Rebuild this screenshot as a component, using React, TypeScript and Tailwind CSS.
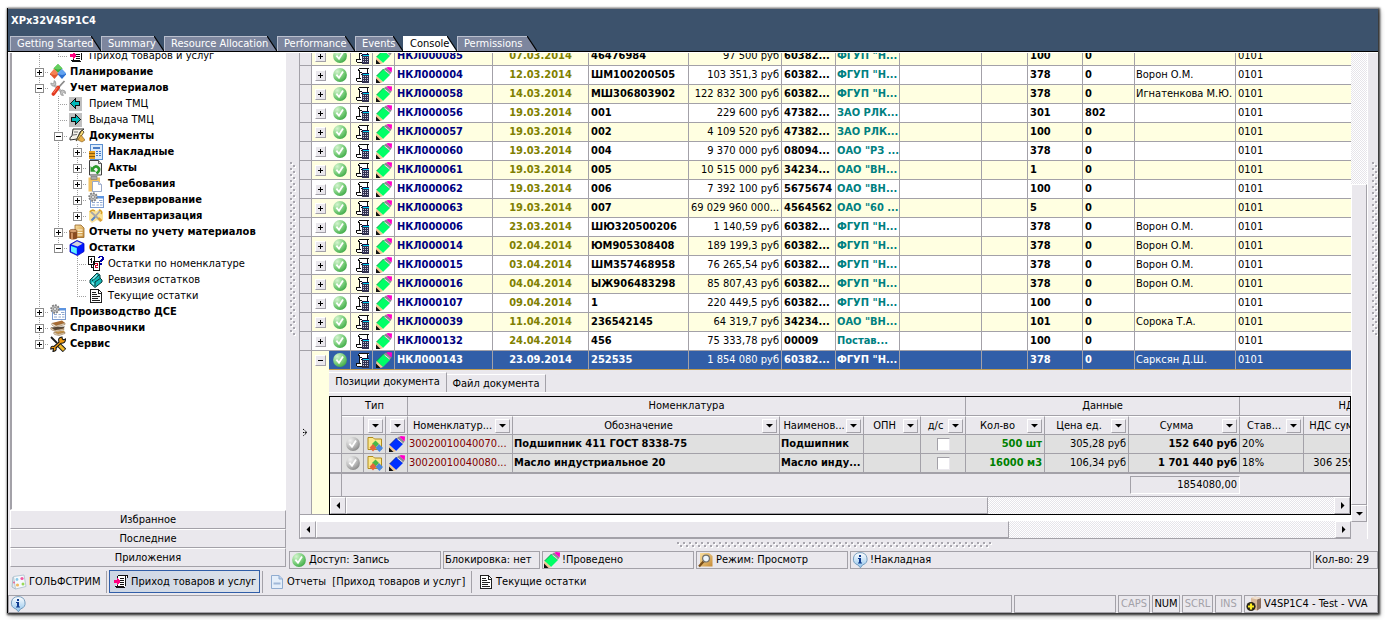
import type { ReactNode } from "react";

const LINE = "border-[#a3a1a8]";
const RAISED = "border border-t-white border-l-white border-r-[#a3a1a8] border-b-[#a3a1a8] bg-[#eae8ed]";
const CHECKER = "bg-[repeating-conic-gradient(#ffffff_0_25%,#e6e4ea_0_50%)] bg-[length:2px_2px]";

/* ---------- icons ---------- */

function Svg({ children, crisp = false }: { children: ReactNode; crisp?: boolean }) {
  return (
    <svg width="16" height="16" viewBox="0 0 16 16" className="block shrink-0" aria-hidden="true" shapeRendering={crisp ? "crispEdges" : "auto"}>
      {children}
    </svg>
  );
}

function Gradients() {
  return (
    <svg width="0" height="0" className="absolute" aria-hidden="true">
      <defs>
        <radialGradient id="ball-green" cx="0.3" cy="0.25" r="0.85">
          <stop offset="0" stopColor="#d4f4cf" />
          <stop offset="0.5" stopColor="#86d486" />
          <stop offset="1" stopColor="#3ba843" />
        </radialGradient>
        <radialGradient id="ball-gray" cx="0.3" cy="0.25" r="0.85">
          <stop offset="0" stopColor="#f0f0f0" />
          <stop offset="0.55" stopColor="#bdbdbd" />
          <stop offset="1" stopColor="#858585" />
        </radialGradient>
        <linearGradient id="info-blue" x1="0" y1="0" x2="0" y2="1">
          <stop offset="0" stopColor="#ffffff" />
          <stop offset="1" stopColor="#8fc3ec" />
        </linearGradient>
        <linearGradient id="tan-sheet" x1="0" y1="0" x2="1" y2="1">
          <stop offset="0" stopColor="#fbe0a0" />
          <stop offset="1" stopColor="#c58a35" />
        </linearGradient>
      </defs>
    </svg>
  );
}

const Ball = ({ gray = false }: { gray?: boolean }) => (
  <Svg>
    <circle cx="8" cy="8" r="6.9" fill={gray ? "url(#ball-gray)" : "url(#ball-green)"} />
    <path d="M4.4 7.6 L7 10.8 L11 4.4" fill="none" stroke="#ffffff" strokeWidth="1.8" />
  </Svg>
);

const Pencil = ({ blue = false }: { blue?: boolean }) => (
  <Svg>
    <path d="M0.5 9 L7.5 2 L14 8 L7 15 Z" fill={blue ? "#0030ff" : "#00ff66"} />
    <path d="M0.5 9 L7.5 2" stroke={blue ? "#001a90" : "#008a3c"} strokeWidth="0.8" />
    <path d="M0.5 9 L7 15 L4.5 16 L0 12 Z" fill="#f2c892" />
    <path d="M0 11.5 L4.5 16 L0 16 Z" fill="#101010" />
    <path d="M7.5 2.4 L10 0.5 L15.6 5.5 L13.5 8 Z" fill="#8c8890" />
    <path d="M8.6 3 L13.6 7" stroke="#e8e8e8" strokeWidth="1" />
    <path d="M10.3 0.8 L12 0 L16 0.6 L15.8 5 L14.6 4.8 Z" fill="#ff00c8" />
  </Svg>
);

const DocCalc = () => (
  <Svg crisp>
    <path d="M4 1 H14 V3 H12 V6 H13 V8 H8 V14 H1 V11 H4 V4 H3 V2 H4 Z" fill="#ffffff" />
    <path d="M4 1 H14 V2 H4 Z M3 2 H4 V4 H3 Z M4 3 H5 V11 H4 Z M5 5 H7 V6 H5 Z M1 11 H6 V12 H1 Z M1 12 H2 V14 H1 Z M2 14 H8 V15 H2 Z M12 2 H13 V6 H12 Z M6 7 H8 V8 H6 Z" fill="#101010" />
    <path d="M7 7 H14 V16 H7 Z" fill="#303050" />
    <path d="M7 6 H14 V7 H7 Z" fill="#101048" />
    <path d="M8 7 H14 V8 H8 Z" fill="#00d0f0" />
    <path d="M8 9h1v1h-1z M10 9h1v1h-1z M12 9h1v1h-1z M8 11h1v1h-1z M10 11h1v1h-1z M12 11h1v1h-1z M8 13h1v1h-1z M10 13h1v1h-1z M12 13h1v1h-1z" fill="#c8c8d8" />
  </Svg>
);

const Receipt = () => (
  <Svg crisp>
    <path d="M5 2 H14 V4 H12 V13 H3 V11 H5 Z" fill="#ffffff" />
    <path d="M5 1 H15 V2 H5 Z M14 2 H15 V4 H14 Z M12 2 H13 V12 H12 Z M4 2 H5 V6 H4 Z M4 10 H5 V12 H4 Z M2 12 H11 V13 H2 Z M3 13 H12 V14 H3 Z M7 4h4v1h-4z M7 6h4v1h-4z M7 8h4v1h-4z M7 10h4v1h-4z" fill="#101010" />
    <path d="M1 6 H4 V4 H5 V5 H6 V6 H7 V9 H6 V10 H5 V11 H4 V9 H1 Z" fill="#ff0080" />
  </Svg>
);

const Planning = () => (
  <Svg>
    <path d="M8 0 L12.5 4.5 L8 9 L3.5 4.5 Z" fill="#3fae3f" />
    <path d="M8 0 L12.5 4.5 L8 5.5 L3.5 4.5 Z" fill="#66d060" />
    <path d="M4.2 5 L8.7 10 L4.5 15 L-0.3 10 Z" fill="#e2562c" />
    <path d="M4.2 5 L8.7 10 L4.5 11 L-0.3 10 Z" fill="#f58252" />
    <path d="M11.8 5 L16.4 10 L12 15 L7.4 10 Z" fill="#2c6fd0" />
    <path d="M11.8 5 L16.4 10 L12 11 L7.4 10 Z" fill="#62a2f0" />
  </Svg>
);

const Tools = () => (
  <Svg>
    <path d="M4 5 L12 12" stroke="#b8b8b8" strokeWidth="2.6" />
    <path d="M0.8 3 Q1 6.6 4.4 6 Q7 4.6 5.4 1.4 L4 0.6 L4 3 L2.6 3.6 Z" fill="#c4c4c4" stroke="#8e8e8e" strokeWidth="0.7" />
    <path d="M11 15 Q9.4 11 12.6 10 Q16 10.4 15.6 13.6 L13.6 12.6 L12.6 13.6 L13.4 15.6 Z" fill="#c4c4c4" stroke="#8e8e8e" strokeWidth="0.7" />
    <path d="M14.5 1 L8 8" stroke="#8a8a8a" strokeWidth="1.8" />
    <path d="M8.2 7.5 L3.4 14" stroke="#e23a20" strokeWidth="3.6" strokeLinecap="round" />
    <path d="M7.5 7.5 L3.5 13" stroke="#ff8a70" strokeWidth="0.9" />
  </Svg>
);

const Arrow = ({ right = false }: { right?: boolean }) => (
  <Svg crisp>
    <rect x="0" y="1" width="13" height="14" fill="#c0c0c0" />
    <path
      d={right ? "M11.5 7.5 L6.5 2.5 V5.5 H2.5 V9.5 H6.5 V12.5 Z" : "M1.5 7.5 L6.5 2.5 V5.5 H10.5 V9.5 H6.5 V12.5 Z"}
      fill="#00b8b8"
      stroke="#101010"
    />
  </Svg>
);

const Documents = () => (
  <Svg>
    <path d="M4 1 H15 L11 4 L8 11 L1 12 Q0 9 3 8 Z" fill="#f4f2ea" stroke="#303030" strokeWidth="1" />
    <path d="M5 4 L9 4 M4 7 L8 6.5" stroke="#707070" />
    <path d="M13 2 L9 9 L7 13 L11 10 L15 4 Z" fill="#ffe27a" stroke="#40341a" strokeWidth="0.8" />
    <path d="M12 7 L16 12 L13 14 L9 12 Z" fill="#e8b04a" stroke="#805818" strokeWidth="0.6" />
  </Svg>
);

const Invoice = () => (
  <Svg crisp>
    <rect x="2.5" y="0.5" width="12" height="15" fill="#dcebfb" stroke="#5a8fd0" />
    <path d="M5 3h7v2h-7z M8 7h2v1h-2z M11 7h2v1h-2z M8 9h2v1h-2z M11 9h2v1h-2z M8 11h2v1h-2z M11 11h2v1h-2z" fill="#4a7cc4" />
    <path d="M1 7h6v2h-6z M1 10h6v2h-6z M1 13h6v2h-6z" fill="#e8a020" />
    <path d="M1 9h6v1h-6z M1 12h6v1h-6z" fill="#8a5a08" />
  </Svg>
);

const Acts = () => (
  <Svg>
    <path d="M1.5 0.5 H10.5 L13.5 3.5 V15 H1.5 Z" fill="#f4f4f4" stroke="#404040" />
    <path d="M10.5 0.5 V3.5 H13.5" fill="#d0d0d0" stroke="#404040" strokeWidth="0.8" />
    <path d="M4.5 9 Q8 4 11 8.5 Q11.8 11 8.5 13.5" fill="none" stroke="#2a9a2a" strokeWidth="2.6" />
    <path d="M2.5 6 V11.8 H8 Z" fill="#2a9a2a" />
  </Svg>
);

const Clipboard = () => (
  <Svg>
    <rect x="0.5" y="1.5" width="11.5" height="14" fill="#f0c060" />
    <rect x="3" y="0.3" width="6" height="3" fill="#a8a8a8" stroke="#707070" strokeWidth="0.6" />
    <path d="M4.5 5.5 H10.5 L13.5 8.5 V15.5 H4.5 Z" fill="#ffffff" stroke="#98a8c8" />
    <path d="M10.5 5.5 V8.5 H13.5" fill="#d8e0f0" stroke="#98a8c8" strokeWidth="0.8" />
  </Svg>
);

const GearTable = () => (
  <Svg>
    <rect x="2.5" y="4.5" width="13" height="11" fill="#ffffff" stroke="#7c9cd0" />
    <path d="M9 4 H16 V6.5 H9 Z" fill="#5c94e0" />
    <path d="M4 10.5h3 M8.5 10.5h2.5 M12 10.5h2.5 M4 13h3 M8.5 13h2.5 M12 13h2.5 M11 8.5h3.5" stroke="#90a8d0" />
    <circle cx="5" cy="5" r="3.8" fill="#c0c0c0" stroke="#808080" strokeWidth="1.8" strokeDasharray="1.8 1.1" />
    <circle cx="5" cy="5" r="1.5" fill="#f4f4f4" stroke="#707070" strokeWidth="0.7" />
  </Svg>
);

const Inventory = () => (
  <Svg>
    <path d="M1 3 L5 1 L8 3 L12 1 L15 4 V12 L12 14 L9 12 L4 15 L1 12 Z" fill="#fbe398" />
    <path d="M3 4 L13 13 M12 3 L4 12" stroke="#a8a8a8" strokeWidth="1.8" />
    <path d="M2 4 Q4 1 7 3 M11 2 Q15 3 13 6" fill="none" stroke="#d8a028" strokeWidth="1.4" />
    <path d="M3.5 12.5 L7 9" stroke="#5c86c8" strokeWidth="2" />
    <path d="M10.5 10 L13.5 13" stroke="#e0a030" strokeWidth="2.4" />
  </Svg>
);

const Reports = () => (
  <Svg>
    <path d="M6 1 H12 L15 4 V13.5 H6 Z" fill="url(#tan-sheet)" stroke="#94662a" strokeWidth="0.8" />
    <path d="M8.5 6h5 M8.5 8.5h5 M8.5 11h5" stroke="#fff6dc" />
    <path d="M0.3 7 V14.4 Q4 16.6 8.2 14.4 V7 Z" fill="#8a4c20" />
    <path d="M3 7.5 V15.4" stroke="#dca070" strokeWidth="1.6" />
    <ellipse cx="4.2" cy="7" rx="3.9" ry="1.7" fill="#d8a070" stroke="#6e3a14" strokeWidth="0.6" />
  </Svg>
);

const Cube = () => (
  <Svg>
    <path d="M1 4.5 L8 0.5 L15 3.5 V11.5 L8.5 15.6 L1 12 Z" fill="#0018ff" stroke="#0000c0" strokeWidth="0.8" />
    <path d="M2.5 4.5 L8 1.2 L13.5 3.8 L8.5 6.5 Z" fill="#d4d4d8" />
    <path d="M2 6 L7.8 8 V14.2 L2 11.6 Z" fill="#60f0ff" />
  </Svg>
);

const Nomenclature = () => (
  <Svg crisp>
    <path d="M0.5 0.5 H6.5 V8.5 H0.5 Z M5.5 5.5 H11.5 V14.5 H5.5 Z" fill="#ffffff" stroke="#101010" />
    <path d="M3 2h1v5h-1z M2 3h1v1h-1z M2 9h1v3h3v-1h-2v-2z" fill="#101010" />
    <path d="M7 7h3v3h-2v1h2v1h-3v-3h2v-1h-2z" fill="#d00020" />
    <path d="M10 1h1v-1h4v1h1v3h-1v1h-1v1h-2v-2h1v-1h1v-2h-2v1h-2z M12 7h2v2h-2z" fill="#0000a8" />
  </Svg>
);

const Revision = () => (
  <Svg>
    <path d="M2 8 L9 1 L12 3 V6 L14 8 V10 L7 15.5 L2 11 Z" fill="#18b8b8" stroke="#083838" strokeWidth="1" />
    <path d="M4 9 L11 3 M7 14 L7 10 L13 6" fill="none" stroke="#083838" strokeWidth="1" />
    <path d="M4 10.5 L6 12.5 M5 7 L9 3" stroke="#a0f4f4" strokeWidth="1.2" />
  </Svg>
);

const Sheet = () => (
  <Svg crisp>
    <path d="M2.5 1.5 H10.5 L13.5 4.5 V14.5 H2.5 Z" fill="#ffffff" stroke="#202020" />
    <path d="M10 1h1v4h3v1h-4z M4 4h4v1h-4z M4 6h5v1h-5z M4 8h8v1h-8z M4 10h6v1h-6z M4 12h8v1h-8z" fill="#202020" />
  </Svg>
);

const Books = () => (
  <Svg>
    <path d="M2 3 L12 0.5 L15 3 L6 6 Z" fill="#a86c34" />
    <path d="M2 3 Q1 5 3 6 L6 7 L15 4.5 V3 L6 5.6 Z" fill="#f4ead8" stroke="#7a5228" strokeWidth="0.5" />
    <path d="M1 7.5 L6 7 L15 6.5 L13 9 L5 11 Z" fill="#58493a" />
    <path d="M1 7.5 Q0 9.5 2 10 L6 11.5 L14 9.5 V8.5 L5 10.3 Z" fill="#f4ead8" stroke="#7a5228" strokeWidth="0.5" />
    <path d="M4 12 L14 10.5 L15 12.5 L8 14 Z" fill="#c09048" />
    <path d="M4 12 Q3 14 5 14.6 L9 15.5 L15 13.5 V12.3 L8 14.2 Z" fill="#efe2c8" stroke="#7a5228" strokeWidth="0.5" />
  </Svg>
);

const Service = () => (
  <Svg>
    <path d="M1 1 L7 7" stroke="#181818" strokeWidth="1.8" />
    <path d="M9 9 L14.5 14.5" stroke="#181818" strokeWidth="4.8" />
    <path d="M9 9 L14 14" stroke="#f0b828" strokeWidth="3" />
    <path d="M15.5 3 Q12 5 12 1 Q7.5 1.5 9 6 L4 10.5 Q0.5 9.5 0.8 13 L3.5 12.5 L3 15.5 Q7 15 6 12 L11 7.2 Q15.5 7.5 15.5 3 Z" fill="#f09a10" stroke="#181818" strokeWidth="1.1" />
  </Svg>
);

const Palette = () => (
  <Svg>
    <path d="M2.5 2.5 L13 1 L15 12.5 L4.5 15 Z" fill="#f6fafd" stroke="#b8c8d4" />
    <path d="M2 3 L1 13 L4.5 15" fill="none" stroke="#a8c0cc" />
    <circle cx="6" cy="5.5" r="1.4" fill="#88c8e8" />
    <circle cx="11" cy="4.5" r="1.6" fill="#f058a0" />
    <circle cx="6.5" cy="11" r="1.6" fill="#f0b860" />
    <circle cx="12" cy="10" r="1.5" fill="#98d858" />
    <circle cx="3" cy="8.5" r="1" fill="#e86898" />
  </Svg>
);

const BlueSheet = () => (
  <Svg>
    <path d="M2.5 1.5 H10 L13.5 5 V14.5 H2.5 Z" fill="#e4eefa" stroke="#90acd0" />
    <path d="M10 1.5 V5 H13.5" fill="#b8d0ee" stroke="#90acd0" />
    <path d="M4.5 9.5 h7" stroke="#a0b8d8" strokeWidth="2" />
  </Svg>
);

const Info = () => (
  <Svg>
    <path d="M8 0.6 A7 6.4 0 0 1 10.5 13 L8.4 15.8 L6 13 A7 6.4 0 0 1 8 0.6 Z" fill="url(#info-blue)" stroke="#6a94b8" strokeWidth="0.9" />
    <path d="M7 3 h2 v2 h-2 z M6 6 h3 v4.4 h1 v1.1 h-4 v-1.1 h1 v-3.3 h-1 z" fill="#103c90" />
  </Svg>
);

const SearchDoc = () => (
  <Svg>
    <path d="M2 1 H11 L14.5 4 V14.5 H2 Z" fill="url(#tan-sheet)" />
    <path d="M1 14.5 L5.5 9.5" stroke="#7a4e18" strokeWidth="2.2" />
    <circle cx="8" cy="6.6" r="3.4" fill="#eef6fc" stroke="#70706c" strokeWidth="1.2" />
  </Svg>
);

const FolderShapes = () => (
  <Svg>
    <path d="M1 1.5 H6 L7.5 3 H14.5 V13.5 H1 Z" fill="#fbe88c" stroke="#b08c20" />
    <path d="M8.5 4.5 L12 8 L8.5 11.5 L5 8 Z" fill="#4ab848" />
    <path d="M6 8 L9.5 11.8 L6 15.5 L2.5 11.8 Z" fill="#e8643c" />
    <path d="M12 8 L16 12 L12.5 16 L8.5 12 Z" fill="#4a88e0" />
  </Svg>
);

const Database = () => (
  <Svg>
    <path d="M5 2 L9 0.5 L15 2 V12 L11 14.5 L5 13 Z" fill="#d8b898" />
    <path d="M11 3.5 L15 2 V12 L11 14.5 Z" fill="#8c7060" />
    <path d="M5 2 L9 0.5 L15 2 L11 3.5 Z" fill="#f0e0d0" />
    <circle cx="5" cy="10.5" r="4.6" fill="#282418" />
    <path d="M5 7.5 v6 M2 10.5 h6" stroke="#ffee20" strokeWidth="2.2" />
  </Svg>
);

/* ---------- small controls ---------- */

function Triangle({ dir }: { dir: "down" | "left" | "right" }) {
  const d = { down: "M0 2 H7 L3.5 5.5 Z", left: "M5 0 V7 L1.5 3.5 Z", right: "M2 0 V7 L5.5 3.5 Z" }[dir];
  return (
    <svg width="7" height="7" viewBox="0 0 7 7" aria-hidden="true">
      <path d={d} fill="#000000" />
    </svg>
  );
}

function ScrollButton({ dir, label }: { dir: "down" | "left" | "right"; label: string }) {
  return (
    <button type="button" aria-label={label} className={`flex h-[17px] w-4 shrink-0 items-center justify-center ${RAISED}`}>
      <Triangle dir={dir} />
    </button>
  );
}

function PlusMinus({ minus = false }: { minus?: boolean }) {
  return (
    <svg width="5" height="5" viewBox="0 0 5 5" shapeRendering="crispEdges" aria-hidden="true">
      <path d={minus ? "M0 2 H5 V3 H0 Z" : "M0 2 H5 V3 H0 Z M2 0 H3 V5 H2 Z"} fill="#000000" />
    </svg>
  );
}

function HScroll({ thumb }: { thumb: string }) {
  return (
    <div className="flex h-[17px]">
      <ScrollButton dir="left" label="Прокрутить влево" />
      <div className={`min-w-0 flex-1 ${CHECKER}`}>
        <div className={`h-full ${thumb} ${RAISED}`} />
      </div>
      <ScrollButton dir="right" label="Прокрутить вправо" />
    </div>
  );
}

function Grip({ vertical = false }: { vertical?: boolean }) {
  const id = vertical ? "grip-v" : "grip-h";
  return (
    <svg aria-hidden="true" shapeRendering="crispEdges" className={vertical ? "h-[174px] w-[6px]" : "h-[6px] w-[315px]"}>
      <defs>
        <pattern id={id} width="6" height="6" patternUnits="userSpaceOnUse">
          <path d="M1 1h2v2h-2z M4 4h2v2h-2z" fill="#ffffff" />
          <path d="M0 0h2v2h-2z M3 3h2v2h-2z" fill="#a8a6ae" />
        </pattern>
      </defs>
      <rect width="100%" height="100%" fill={`url(#${id})`} />
    </svg>
  );
}

/* ---------- header tabs ---------- */

const TABS: [string, string][] = [
  ["Getting Started", "w-[91px]"],
  ["Summary", "w-[63px]"],
  ["Resource Allocation", "w-[113px]"],
  ["Performance", "w-[78px]"],
  ["Events", "w-[48px]"],
  ["Console", "w-[54px]"],
  ["Permissions", "w-[80px]"],
];

function HeaderTab({ label, width }: { label: string; width: string }) {
  const active = label === "Console";
  return (
    <button
      type="button"
      className={`relative flex h-[15px] shrink-0 items-center border-t border-l pl-1.5 whitespace-nowrap ${width} ${
        active ? "border-white bg-white text-black" : "border-[#b9bfcd] bg-[#7d869e] text-white"
      }`}
    >
      <svg width="10" height="15" viewBox="0 0 10 15" className="absolute -top-px right-0" aria-hidden="true">
        <path d="M0 0 H10 V15 Z" fill="#3c526c" />
        <path d="M0 0 L10 15" stroke="#000000" strokeWidth="1.2" />
      </svg>
      <span className="relative">{label}</span>
    </button>
  );
}

/* ---------- tree ---------- */

interface Node {
  guides: string;
  icon: ReactNode;
  label: string;
  bold?: boolean;
}

const TREE: Node[] = [
  { guides: "|L", icon: <Receipt />, label: "Приход товаров и услуг" },
  { guides: "+", icon: <Planning />, label: "Планирование", bold: true },
  { guides: "-", icon: <Tools />, label: "Учет материалов", bold: true },
  { guides: "|T", icon: <Arrow />, label: "Прием ТМЦ" },
  { guides: "|T", icon: <Arrow right />, label: "Выдача ТМЦ" },
  { guides: "|-", icon: <Documents />, label: "Документы", bold: true },
  { guides: "||+", icon: <Invoice />, label: "Накладные", bold: true },
  { guides: "||+", icon: <Acts />, label: "Акты", bold: true },
  { guides: "||+", icon: <Clipboard />, label: "Требования", bold: true },
  { guides: "||+", icon: <GearTable />, label: "Резервирование", bold: true },
  { guides: "||e", icon: <Inventory />, label: "Инвентаризация", bold: true },
  { guides: "|+", icon: <Reports />, label: "Отчеты по учету материалов", bold: true },
  { guides: "|m", icon: <Cube />, label: "Остатки", bold: true },
  { guides: "| T", icon: <Nomenclature />, label: "Остатки по номенклатуре" },
  { guides: "| T", icon: <Revision />, label: "Ревизия остатков" },
  { guides: "| L", icon: <Sheet />, label: "Текущие остатки" },
  { guides: "+", icon: <GearTable />, label: "Производство ДСЕ", bold: true },
  { guides: "+", icon: <Books />, label: "Справочники", bold: true },
  { guides: "e", icon: <Service />, label: "Сервис", bold: true },
];

function Guide({ kind }: { kind: string }) {
  const last = kind === "L" || kind === "e" || kind === "m";
  const box = "+-em".includes(kind);
  const minus = kind === "-" || kind === "m";
  return (
    <svg width="19" height="16" viewBox="0 0 19 16" className="shrink-0" shapeRendering="crispEdges" aria-hidden="true">
      {kind !== " " && <path d={last ? "M9.5 0 V8" : "M9.5 0 V16"} stroke="#a0a0a0" strokeDasharray="1 1" />}
      {kind !== " " && kind !== "|" && <path d="M9 8.5 H19" stroke="#a0a0a0" strokeDasharray="1 1" />}
      {box && <rect x="5.5" y="4.5" width="8" height="8" fill="#ffffff" stroke="#8c8c8c" />}
      {box && <path d={minus ? "M7 8.5 H12" : "M7 8.5 H12 M9.5 6 V11"} stroke="#000000" />}
    </svg>
  );
}

function Tree() {
  return (
    <ul className="-mt-[5px] pl-[18px]">
      {TREE.map((n) => (
        <li key={n.label} className={`flex h-4 items-center whitespace-nowrap ${n.bold ? "font-bold" : ""}`}>
          {n.guides.split("").map((g, i) => (
            <Guide key={i} kind={g} />
          ))}
          <span className="mr-1 ml-px">{n.icon}</span>
          <a href="#" className="leading-4">
            {n.label}
          </a>
        </li>
      ))}
    </ul>
  );
}

/* ---------- main grid ---------- */

type Row = [string, string, string, string, string, string, string, string, string];

const ROWS: Row[] = [
  ["НКЛ000085", "07.03.2014", "46476984", "97 500 руб", "60382...", 'ФГУП "Н...', "100", "0", ""],
  ["НКЛ000004", "12.03.2014", "ШМ100200505", "103 351,3 руб", "60382...", 'ФГУП "Н...', "378", "0", "Ворон О.М."],
  ["НКЛ000058", "14.03.2014", "МШ306803902", "122 832 300 руб", "60382...", 'ФГУП "Н...', "378", "0", "Игнатенкова М.Ю."],
  ["НКЛ000056", "19.03.2014", "001", "229 600 руб", "47382...", "ЗАО РЛК...", "301", "802", ""],
  ["НКЛ000057", "19.03.2014", "002", "4 109 520 руб", "47382...", "ЗАО РЛК...", "100", "0", ""],
  ["НКЛ000060", "19.03.2014", "004", "9 370 000 руб", "08094...", 'ОАО "РЗ ...', "378", "0", ""],
  ["НКЛ000061", "19.03.2014", "005", "10 515 000 руб", "34234...", 'ОАО "ВН...', "1", "0", ""],
  ["НКЛ000062", "19.03.2014", "006", "7 392 100 руб", "5675674", 'ОАО "ВН...', "100", "0", ""],
  ["НКЛ000063", "19.03.2014", "007", "69 029 960 000...", "4564562", 'ОАО "60 ...', "5", "0", ""],
  ["НКЛ000006", "23.03.2014", "ШЮ320500206", "1 140,59 руб", "60382...", 'ФГУП "Н...', "378", "0", "Ворон О.М."],
  ["НКЛ000014", "02.04.2014", "ЮМ905308408", "189 199,3 руб", "60382...", 'ФГУП "Н...', "378", "0", "Ворон О.М."],
  ["НКЛ000015", "03.04.2014", "ШМ357468958", "76 265,54 руб", "60382...", 'ФГУП "Н...', "378", "0", "Ворон О.М."],
  ["НКЛ000016", "04.04.2014", "ЫЖ906483298", "85 807,43 руб", "60382...", 'ФГУП "Н...', "378", "0", "Ворон О.М."],
  ["НКЛ000107", "09.04.2014", "1", "220 449,5 руб", "60382...", 'ФГУП "Н...', "100", "0", ""],
  ["НКЛ000039", "11.04.2014", "236542145", "64 319,7 руб", "34234...", 'ОАО "ВН...', "101", "0", "Сорока Т.А."],
  ["НКЛ000132", "24.04.2014", "456", "75 333,78 руб", "00009", "Постав...", "100", "0", ""],
  ["НКЛ000143", "23.09.2014", "252535", "1 854 080 руб", "60382...", 'ФГУП "Н...', "378", "0", "Сарксян Д.Ш."],
];

function DataRow({ row, index }: { row: Row; index: number }) {
  const selected = index === ROWS.length - 1;
  const [num, date, doc, sum, code, org, a, b, person] = row;
  const stripe = index % 2 === 0 ? "bg-[#ffffe1]" : "bg-white";
  const cell = `h-[19px] overflow-hidden p-0 border-r border-b leading-[18px] whitespace-nowrap ${LINE} ${selected ? "border-b-[#c09a4c] border-b-dotted" : ""}`;
  const text = `${cell} px-0.5`;
  const color = (c: string) => (selected ? "" : c);
  return (
    <tr className={selected ? "bg-[#315ea8] text-white" : stripe}>
      <td rowSpan={selected ? 2 : 1} className={`h-[19px] border-r border-b bg-[#eae8ed] p-0 ${LINE}`}>
        {selected && (
          <svg width="7" height="9" viewBox="0 0 7 9" className="ml-0.5" aria-hidden="true">
            <path d="M1 1 L5 4.5 L1 8 M1 4.5 H5" fill="none" stroke="#000000" strokeDasharray="1.4 0.8" />
          </svg>
        )}
      </td>
      <td rowSpan={selected ? 2 : 1} className={`h-[19px] border-b p-0 align-top ${LINE} ${stripe}`}>
        <button type="button" aria-label={selected ? "Свернуть" : "Развернуть"} className={`mt-1 ml-[3px] flex size-[11px] items-center justify-center ${RAISED}`}>
          <PlusMinus minus={selected} />
        </button>
      </td>
      <td className={cell}>
        <span className="ml-[3px] block">
          <Ball />
        </span>
      </td>
      <td className={cell}>
        <span className="ml-1 block">
          <DocCalc />
        </span>
      </td>
      <td className={cell}>
        <span className="ml-[3px] block">
          <Pencil />
        </span>
      </td>
      <td className={`${text} font-bold ${color("text-[#000080]")}`}>{num}</td>
      <td className={`${text} text-center font-bold ${color("text-[#808000]")}`}>{date}</td>
      <td className={`${text} font-bold`}>{doc}</td>
      <td className={`${text} text-right`}>{sum}</td>
      <td className={`${text} font-bold`}>{code}</td>
      <td className={`${cell} pl-px font-bold ${color("text-[#008080]")}`}>{org}</td>
      <td className={text} />
      <td className={text} />
      <td className={`${text} font-bold`}>{a}</td>
      <td className={`${text} font-bold`}>{b}</td>
      <td className={`${cell} pl-px`}>{person}</td>
      <td className={`${cell} border-r-0 px-0.5`}>0101</td>
    </tr>
  );
}

/* ---------- nested detail grid ---------- */

function HeadCell({ label = "", filter = true }: { label?: string; filter?: boolean }) {
  return (
    <th scope="col" className={`h-[19px] border-r border-b border-t border-t-white p-0 font-normal ${LINE}`}>
      <div className="flex h-[17px] items-center px-0.5">
        <span className="flex min-w-0 flex-1 justify-center overflow-hidden leading-4 whitespace-nowrap">{label}</span>
        {filter && (
          <button type="button" aria-label={`Фильтр ${label}`} className={`flex h-[14px] w-[15px] shrink-0 items-center justify-center ${RAISED}`}>
            <Triangle dir="down" />
          </button>
        )}
      </div>
    </th>
  );
}

const GROUPS: [string, number][] = [
  ["Тип", 3],
  ["Номенклатура", 5],
  ["Данные", 3],
  ["НДС", 3],
];

const DETAILS = [
  { code: "30020010040070...", mark: "Подшипник 411 ГОСТ 8338-75", name: "Подшипник", qty: "500 шт", price: "305,28 руб", sum: "152 640 руб", rate: "20%", vat: "" },
  { code: "30020010040080...", mark: "Масло индустриальное 20", name: "Масло инду...", qty: "16000 м3", price: "106,34 руб", sum: "1 701 440 руб", rate: "18%", vat: "306 259,2 руб" },
];

const DETAIL_COLS = [12, 22, 22, 22, 105, 267, 84, 57, 45, 79, 84, 111, 64, 84, 72];

function DetailGrid() {
  const td = `h-[19px] overflow-hidden border-r border-b px-0.5 py-0 leading-[18px] whitespace-nowrap ${LINE}`;
  const tdTight = `h-[19px] overflow-hidden border-r border-b py-0 pl-px leading-[18px] whitespace-nowrap ${LINE}`;
  const icon = `h-[19px] border-r border-b p-0 pl-[3px] ${LINE}`;
  return (
    <div className="border border-black">
      <div className="overflow-hidden">
        <table className="w-[1130px] table-fixed border-separate border-spacing-0">
          <colgroup>
            {DETAIL_COLS.map((w, i) => (
              <col key={i} style={{ width: w }} />
            ))}
          </colgroup>
          <thead>
            <tr>
              <th rowSpan={2} className={`border-r border-b p-0 ${LINE}`} />
              {GROUPS.map(([g, span]) => (
                <th key={g} scope="colgroup" colSpan={span} className={`h-[19px] border-r border-b p-0 leading-[18px] font-normal ${LINE}`}>
                  {g}
                </th>
              ))}
            </tr>
            <tr>
              <HeadCell filter={false} />
              <HeadCell />
              <HeadCell />
              <HeadCell label="Номенклатур..." />
              <HeadCell label="Обозначение" />
              <HeadCell label="Наименов..." />
              <HeadCell label="ОПН" />
              <HeadCell label="д/с" />
              <HeadCell label="Кол-во" />
              <HeadCell label="Цена ед." />
              <HeadCell label="Сумма" />
              <HeadCell label="Став..." />
              <HeadCell label="НДС сумма" />
              <HeadCell label="Итого" />
            </tr>
          </thead>
          <tbody>
            {DETAILS.map((d) => (
              <tr key={d.code} className="bg-[#e0e0e0]">
                <td className={`h-[19px] border-r border-b bg-[#eae8ed] p-0 ${LINE}`} />
                <td className={icon}><Ball gray /></td>
                <td className={icon}><FolderShapes /></td>
                <td className={icon}><Pencil blue /></td>
                <td className={`${tdTight} text-[#800000]`}>{d.code}</td>
                <td className={`${tdTight} font-bold`}>{d.mark}</td>
                <td className={`${tdTight} font-bold`}>{d.name}</td>
                <td className={td} />
                <td className={td}>
                  <input type="checkbox" aria-label={`д/с ${d.name}`} className="mx-auto block size-[13px] appearance-none border border-t-[#a3a1a8] border-l-[#a3a1a8] border-r-[#eae8ed] border-b-[#eae8ed] bg-white" />
                </td>
                <td className={`${td} text-right font-bold text-[#008000]`}>{d.qty}</td>
                <td className={`${td} text-right`}>{d.price}</td>
                <td className={`${td} text-right font-bold`}>{d.sum}</td>
                <td className={td}>{d.rate}</td>
                <td className={`${td} text-right`}>{d.vat}</td>
                <td className={td} />
              </tr>
            ))}
          </tbody>
          <tfoot>
            <tr>
              <td className={`border-t border-r p-0 ${LINE}`} />
              <td colSpan={10} className={`border-t p-0 ${LINE}`} />
              <td className={`border-t px-0 py-0.5 ${LINE}`}>
                <div className="ml-px border border-t-[#a3a1a8] border-l-[#a3a1a8] border-r-white border-b-white pr-0.5 text-right leading-4">1854080,00</div>
              </td>
              <td colSpan={3} className={`border-t p-0 ${LINE}`} />
            </tr>
          </tfoot>
        </table>
      </div>
      <div className={`border-t ${LINE}`}>
        <HScroll thumb="w-[65%]" />
      </div>
    </div>
  );
}

const GRID_COLS = [12, 17, 22, 22, 22, 98, 96, 100, 93, 54, 64, 82, 46, 55, 52, 101];

function MainGrid() {
  return (
    <div className="flex">
      <div className={`min-w-0 flex-1 border-b border-l ${LINE}`}>
        <div className="overflow-hidden bg-white pb-[6px]">
          <table className="-mt-[6px] w-full table-fixed border-separate border-spacing-0">
            <colgroup>
              {GRID_COLS.map((w, i) => (
                <col key={i} style={{ width: w }} />
              ))}
              <col />
            </colgroup>
            <tbody>
              {ROWS.map((r, i) => (
                <DataRow key={r[0]} row={r} index={i} />
              ))}
              <tr>
                <td colSpan={15} className="overflow-hidden bg-[#eae8ed] p-0">
                  <div className="flex h-[23px] items-end border-b border-white pt-[3px]" role="tablist">
                    <button type="button" role="tab" aria-selected="true" className={`h-5 w-[118px] border-t border-r border-t-white pb-0.5 ${LINE}`}>
                      Позиции документа
                    </button>
                    <button type="button" role="tab" aria-selected="false" className={`h-[18px] w-[99px] border-t border-r border-t-white ${LINE}`}>
                      Файл документа
                    </button>
                  </div>
                  <div className="pt-[3px]">
                    <DetailGrid />
                  </div>
                </td>
              </tr>
            </tbody>
          </table>
        </div>
        <HScroll thumb="w-[68%]" />
      </div>
      <div className="flex w-4 flex-col pb-[17px]">
        <div className={`h-[131px] ${CHECKER}`} />
        <div className={`flex-1 ${RAISED}`} />
        <ScrollButton dir="down" label="Прокрутить вниз" />
      </div>
      <div className="w-[11px] shrink-0 border-l border-white pt-[109px] pl-1">
        <Grip vertical />
      </div>
    </div>
  );
}

/* ---------- status bars ---------- */

function Panel({ icon, children, className }: { icon?: ReactNode; children?: ReactNode; className: string }) {
  return (
    <div className={`flex h-[18px] items-center gap-0.5 border px-px whitespace-nowrap ${LINE} ${className}`}>
      {icon}
      {children}
    </div>
  );
}

const Separator = () => <span className="mx-0.5 h-[22px] w-px bg-[#a3a1a8]" />;

function TaskButton({ icon, label, className }: { icon: ReactNode; label: string; className: string }) {
  return (
    <button type="button" className={`flex h-[23px] items-center gap-0.5 border whitespace-pre ${className}`}>
      {icon}
      {label}
    </button>
  );
}

export default function App() {
  return (
    <div className="min-h-screen bg-white pt-2 pr-[7px] pb-[7px] pl-[7px] font-['DejaVu_Sans_Condensed','DejaVu_Sans',sans-serif] text-[11px] leading-4 text-black">
      <Gradients />
      <div className="border-l border-l-black bg-[#eae8ed] shadow-[1px_1px_2px_1px_rgba(0,0,0,0.75),2px_3px_5px_rgba(0,0,0,0.3)]">
        <header className="border-t border-b border-t-[#8c8c90] border-b-white bg-[#3c526c]">
          <h1 className="h-[27px] pt-1 pl-[3px] text-[11px] leading-4 font-bold text-white">XPx32V4SP1C4</h1>
          <nav className="flex border-b border-black pl-0.5" aria-label="Разделы">
            {TABS.map(([label, width]) => (
              <HeaderTab key={label} label={label} width={width} />
            ))}
          </nav>
        </header>

        <div className="flex">
          <aside className="flex w-[278px] shrink-0 flex-col pl-0.5">
            <div className={`min-h-0 flex-1 overflow-hidden border-r border-b border-l-2 border-r-white border-b-white bg-white ${LINE}`}>
              <Tree />
            </div>
            {["Избранное", "Последние", "Приложения"].map((t) => (
              <button key={t} type="button" className="h-[19px] border border-t-white border-l-white border-r-[#a3a1a8] border-b-[#a3a1a8] leading-[17px]">
                {t}
              </button>
            ))}
            <div className="h-0.5" />
          </aside>
          <main className="flex min-w-0 flex-1 flex-col">
            <div className="flex">
              <div className="flex w-[13px] shrink-0 justify-center pt-[109px]">
                <Grip vertical />
              </div>
              <div className="min-w-0 flex-1">
                <MainGrid />
              </div>
            </div>
            <div className="flex h-3 items-center justify-center pl-1">
              <Grip />
            </div>
            <div className="flex gap-[2px] pl-[3px]">
              <Panel className="w-[152px]" icon={<Ball />}>Доступ: Запись</Panel>
              <Panel className="w-[97px]">Блокировка: нет</Panel>
              <Panel className="w-[152px]" icon={<Pencil />}>!Проведено</Panel>
              <Panel className="w-[152px]" icon={<SearchDoc />}>Режим: Просмотр</Panel>
              <Panel className="min-w-0 flex-1" icon={<Info />}>!Накладная</Panel>
              <Panel className="w-[65px]">Кол-во: 29</Panel>
            </div>
          </main>
        </div>

        <div className="flex h-[26px] items-center pb-px">
          <TaskButton icon={<Palette />} label="ГОЛЬФСТРИМ" className="w-[96px] border-transparent pl-[2px]" />
          <Separator />
          <TaskButton icon={<Receipt />} label="Приход товаров и услуг" className="w-[151px] border-[#315ea8] bg-linear-to-r from-[#cdd6e4] to-[#dde2ea] pl-[3px]" />
          <Separator />
          <TaskButton icon={<BlueSheet />} label="Отчеты  [Приход товаров и услуг]" className="w-[204px] border-transparent pl-[3px]" />
          <Separator />
          <TaskButton icon={<Sheet />} label="Текущие остатки" className="border-transparent pl-[3px]" />
        </div>

        <footer className="flex gap-[2px]">
          <Panel className="min-w-0 flex-1" icon={<Info />} />
          <Panel className="w-[102px]" />
          <Panel className="w-[32px] justify-center text-[#a3a1a8]">CAPS</Panel>
          <Panel className="w-[28px] justify-center">NUM</Panel>
          <Panel className="w-[31px] justify-center text-[#a3a1a8]">SCRL</Panel>
          <Panel className="w-[27px] justify-center text-[#a3a1a8]">INS</Panel>
          <Panel className="w-[134px]" icon={<Database />}>V4SP1C4 - Test - VVA</Panel>
        </footer>
      </div>
    </div>
  );
}
